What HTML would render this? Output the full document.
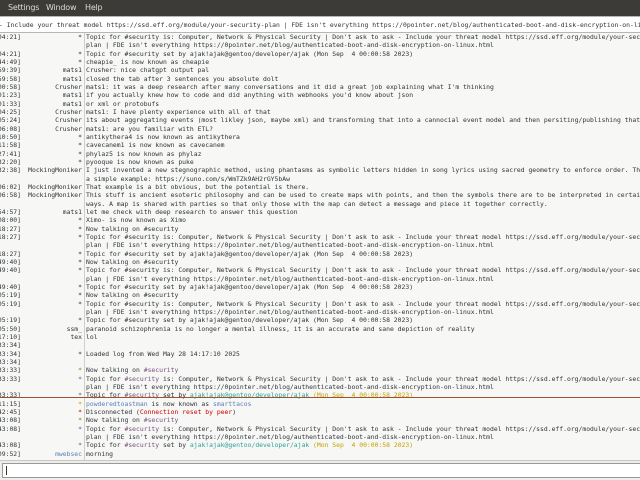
<!DOCTYPE html>
<html><head><meta charset="utf-8"><style>
*{margin:0;padding:0;box-sizing:border-box}
body{width:640px;height:480px;overflow:hidden;background:#ededeb;font-family:"DejaVu Sans Mono","Liberation Mono",monospace;color:#2e3436;position:relative}
#menu{position:absolute;left:0;top:0;width:640px;height:16px;background:#3c3b37;color:#dfdbd2;font-family:"DejaVu Sans","Liberation Sans",sans-serif;font-size:8px;letter-spacing:-0.2px}
#menu span{position:absolute;top:3px}
#topic{position:absolute;left:-2px;top:16px;width:644px;height:17px;background:#fff;border:1px solid #b6b6b3;font-size:6.4px;white-space:pre;line-height:16px;overflow:hidden}
#log{position:absolute;left:0;top:33px;width:640px;height:428px;background:#f7f7f6;border-bottom:1px solid #c9c9c6;overflow:hidden;font-size:6.4px}
#sep{position:absolute;left:84px;top:0;width:1px;height:428px;background:#cfcfcc}
.l{position:absolute;left:0;width:640px;height:8.33px;line-height:8.33px;white-space:pre}
.t{position:absolute;left:-60px;width:81px;text-align:right}
.n{position:absolute;left:0;width:82px;text-align:right}
.m{position:absolute;left:86px}
.g{color:#4e9a06}.p{color:#75507b}.h{color:#2aa198}.y{color:#c4a000}.b{color:#5a7fb8}.r{color:#cc0000}.o{color:#c4a000}
#mark{position:absolute;left:0;top:364px;width:640px;height:1px;background:#a0522d}
#input{position:absolute;left:2px;top:463px;width:640px;height:15px;background:#fff;border:1px solid #9a9a97}
#cur{position:absolute;left:3px;top:2px;width:1px;height:9px;background:#333}
</style></head><body>
<div id="menu"><span style="left:8px">Settings</span><span style="left:46px">Window</span><span style="left:85px">Help</span></div>
<div id="topic">- Include your threat model https://ssd.eff.org/module/your-security-plan | FDE isn't everything https://0pointer.net/blog/authenticated-boot-and-disk-encryption-on-linux.html</div>
<div id="log">
<div id="sep"></div>
<div class="l" style="top:0px"><span class="t">[04:21]</span><span class="n">*</span><span class="m">Topic for #security is: Computer, Network &amp; Physical Security | Don't ask to ask - Include your threat model https://ssd.eff.org/module/your-security-</span></div>
<div class="l" style="top:8.33px"><span class="m">plan | FDE isn't everything https://0pointer.net/blog/authenticated-boot-and-disk-encryption-on-linux.html</span></div>
<div class="l" style="top:16.66px"><span class="t">[04:21]</span><span class="n">*</span><span class="m">Topic for #security set by ajak!ajak@gentoo/developer/ajak (Mon Sep  4 00:00:58 2023)</span></div>
<div class="l" style="top:24.99px"><span class="t">[44:49]</span><span class="n">*</span><span class="m">cheapie_ is now known as cheapie</span></div>
<div class="l" style="top:33.32px"><span class="t">[59:39]</span><span class="n">mats1</span><span class="m">Crusher: nice chatgpt output pal</span></div>
<div class="l" style="top:41.65px"><span class="t">[59:58]</span><span class="n">mats1</span><span class="m">closed the tab after 3 sentences you absolute dolt</span></div>
<div class="l" style="top:49.98px"><span class="t">[00:58]</span><span class="n">Crusher</span><span class="m">mats1: it was a deep research after many conversations and it did a great job explaining what I'm thinking</span></div>
<div class="l" style="top:58.31px"><span class="t">[01:23]</span><span class="n">mats1</span><span class="m">if you actually knew how to code and did anything with webhooks you'd know about json</span></div>
<div class="l" style="top:66.64px"><span class="t">[01:33]</span><span class="n">mats1</span><span class="m">or xml or protobufs</span></div>
<div class="l" style="top:74.97px"><span class="t">[04:25]</span><span class="n">Crusher</span><span class="m">mats1: I have plenty experience with all of that</span></div>
<div class="l" style="top:83.3px"><span class="t">[05:24]</span><span class="n">Crusher</span><span class="m">its about aggregating events (most likley json, maybe xml) and transforming that into a cannocial event model and then persiting/publishing that</span></div>
<div class="l" style="top:91.63px"><span class="t">[06:08]</span><span class="n">Crusher</span><span class="m">mats1: are you familiar with ETL?</span></div>
<div class="l" style="top:99.96px"><span class="t">[10:50]</span><span class="n">*</span><span class="m">antikythera4 is now known as antikythera</span></div>
<div class="l" style="top:108.29px"><span class="t">[11:58]</span><span class="n">*</span><span class="m">cavecanem1 is now known as cavecanem</span></div>
<div class="l" style="top:116.62px"><span class="t">[27:41]</span><span class="n">*</span><span class="m">phylaz5 is now known as phylaz</span></div>
<div class="l" style="top:124.95px"><span class="t">[32:20]</span><span class="n">*</span><span class="m">pyooque is now known as puke</span></div>
<div class="l" style="top:133.28px"><span class="t">[32:38]</span><span class="n">MockingMoniker</span><span class="m">I just invented a new stegnographic method, using phantasms as symbolic letters hidden in song lyrics using sacred geometry to enforce order. This</span></div>
<div class="l" style="top:141.61px"><span class="m">a simple example: https://suno.com/s/WmTZk9AH2rGY5bAw</span></div>
<div class="l" style="top:149.94px"><span class="t">[06:02]</span><span class="n">MockingMoniker</span><span class="m">That example is a bit obvious, but the potential is there.</span></div>
<div class="l" style="top:158.27px"><span class="t">[06:58]</span><span class="n">MockingMoniker</span><span class="m">This stuff is ancient esoteric philosophy and can be used to create maps with points, and then the symbols there are to be interpreted in certain</span></div>
<div class="l" style="top:166.6px"><span class="m">ways. A map is shared with parties so that only those with the map can detect a message and piece it together correctly.</span></div>
<div class="l" style="top:174.93px"><span class="t">[54:57]</span><span class="n">mats1</span><span class="m">let me check with deep research to answer this question</span></div>
<div class="l" style="top:183.26px"><span class="t">[08:00]</span><span class="n">*</span><span class="m">Ximo- is now known as Ximo</span></div>
<div class="l" style="top:191.59px"><span class="t">[18:27]</span><span class="n">*</span><span class="m">Now talking on #security</span></div>
<div class="l" style="top:199.92px"><span class="t">[18:27]</span><span class="n">*</span><span class="m">Topic for #security is: Computer, Network &amp; Physical Security | Don't ask to ask - Include your threat model https://ssd.eff.org/module/your-security-</span></div>
<div class="l" style="top:208.25px"><span class="m">plan | FDE isn't everything https://0pointer.net/blog/authenticated-boot-and-disk-encryption-on-linux.html</span></div>
<div class="l" style="top:216.58px"><span class="t">[18:27]</span><span class="n">*</span><span class="m">Topic for #security set by ajak!ajak@gentoo/developer/ajak (Mon Sep  4 00:00:58 2023)</span></div>
<div class="l" style="top:224.91px"><span class="t">[49:40]</span><span class="n">*</span><span class="m">Now talking on #security</span></div>
<div class="l" style="top:233.24px"><span class="t">[49:40]</span><span class="n">*</span><span class="m">Topic for #security is: Computer, Network &amp; Physical Security | Don't ask to ask - Include your threat model https://ssd.eff.org/module/your-security-</span></div>
<div class="l" style="top:241.57px"><span class="m">plan | FDE isn't everything https://0pointer.net/blog/authenticated-boot-and-disk-encryption-on-linux.html</span></div>
<div class="l" style="top:249.9px"><span class="t">[49:40]</span><span class="n">*</span><span class="m">Topic for #security set by ajak!ajak@gentoo/developer/ajak (Mon Sep  4 00:00:58 2023)</span></div>
<div class="l" style="top:258.23px"><span class="t">[05:19]</span><span class="n">*</span><span class="m">Now talking on #security</span></div>
<div class="l" style="top:266.56px"><span class="t">[05:19]</span><span class="n">*</span><span class="m">Topic for #security is: Computer, Network &amp; Physical Security | Don't ask to ask - Include your threat model https://ssd.eff.org/module/your-security-</span></div>
<div class="l" style="top:274.89px"><span class="m">plan | FDE isn't everything https://0pointer.net/blog/authenticated-boot-and-disk-encryption-on-linux.html</span></div>
<div class="l" style="top:283.22px"><span class="t">[05:19]</span><span class="n">*</span><span class="m">Topic for #security set by ajak!ajak@gentoo/developer/ajak (Mon Sep  4 00:00:58 2023)</span></div>
<div class="l" style="top:291.55px"><span class="t">[05:50]</span><span class="n">ssm_</span><span class="m">paranoid schizophrenia is no longer a mental illness, it is an accurate and sane depiction of reality</span></div>
<div class="l" style="top:299.88px"><span class="t">[17:10]</span><span class="n">tex</span><span class="m">lol</span></div>
<div class="l" style="top:308.21px"><span class="t">[33:34]</span></div>
<div class="l" style="top:316.54px"><span class="t">[33:34]</span><span class="n">*</span><span class="m">Loaded log from Wed May 28 14:17:10 2025</span></div>
<div class="l" style="top:324.87px"><span class="t">[33:34]</span></div>
<div class="l" style="top:333.2px"><span class="t">[33:33]</span><span class="n g">*</span><span class="m">Now talking on <span class="p">#security</span></span></div>
<div class="l" style="top:341.53px"><span class="t">[33:33]</span><span class="n p">*</span><span class="m">Topic for <span class="p">#security</span> is: Computer, Network &amp; Physical Security | Don't ask to ask - Include your threat model https://ssd.eff.org/module/your-security-</span></div>
<div class="l" style="top:349.86px"><span class="m">plan | FDE isn't everything https://0pointer.net/blog/authenticated-boot-and-disk-encryption-on-linux.html</span></div>
<div class="l" style="top:358.19px"><span class="t">[33:33]</span><span class="n p">*</span><span class="m">Topic for <span class="p">#security</span> set by <span class="h">ajak!ajak@gentoo/developer/ajak</span> <span class="y">(Mon Sep  4 00:00:58 2023)</span></span></div>
<div id="mark"></div>
<div class="l" style="top:366.52px"><span class="t">[11:15]</span><span class="n o">*</span><span class="m"><span class="b">powderedtoastman</span> is now known as <span class="b">smarttacos</span></span></div>
<div class="l" style="top:374.85px"><span class="t">[42:45]</span><span class="n r">*</span><span class="m">Disconnected (<span class="r">Connection reset by peer</span>)</span></div>
<div class="l" style="top:383.18px"><span class="t">[43:08]</span><span class="n g">*</span><span class="m">Now talking on <span class="p">#security</span></span></div>
<div class="l" style="top:391.51px"><span class="t">[43:08]</span><span class="n p">*</span><span class="m">Topic for <span class="p">#security</span> is: Computer, Network &amp; Physical Security | Don't ask to ask - Include your threat model https://ssd.eff.org/module/your-security-</span></div>
<div class="l" style="top:399.84px"><span class="m">plan | FDE isn't everything https://0pointer.net/blog/authenticated-boot-and-disk-encryption-on-linux.html</span></div>
<div class="l" style="top:408.17px"><span class="t">[43:08]</span><span class="n p">*</span><span class="m">Topic for <span class="p">#security</span> set by <span class="h">ajak!ajak@gentoo/developer/ajak</span> <span class="y">(Mon Sep  4 00:00:58 2023)</span></span></div>
<div class="l" style="top:416.5px"><span class="t">[09:52]</span><span class="n b">mwebsec</span><span class="m">morning</span></div>
</div>
<div id="input"><div id="cur"></div></div>
</body></html>
